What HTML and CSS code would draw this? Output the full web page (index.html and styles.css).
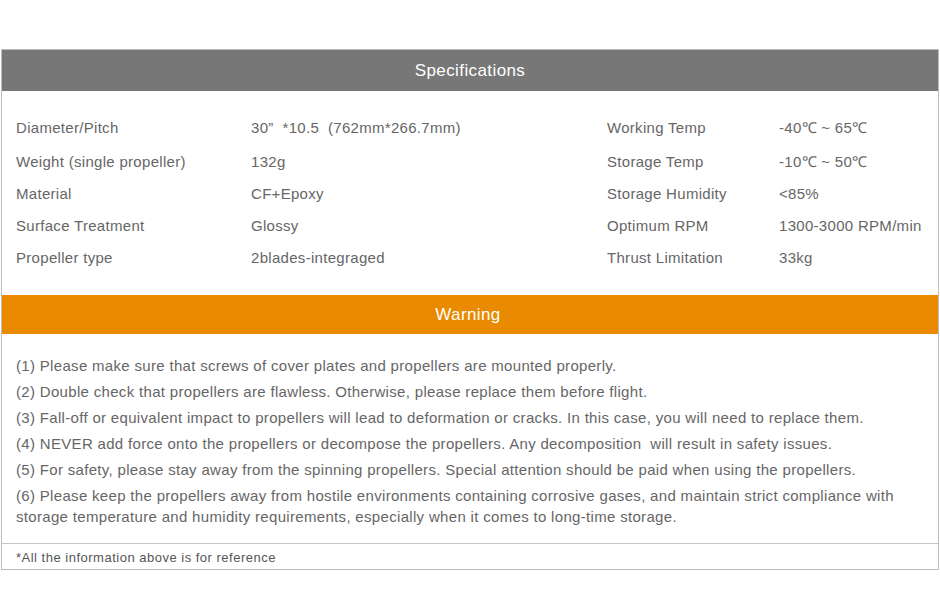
FILE: index.html
```html
<!DOCTYPE html>
<html lang="en">
<head>
<meta charset="utf-8">
<title>Specifications</title>
<link rel="stylesheet" href="styles.css">
</head>
<body>
<div class="panel">
  <div class="bar bar-gray">Specifications</div>
  <div class="specs">
    <div class="spec-row first">
      <span class="lbl">Diameter/Pitch</span>
      <span class="val">30”&nbsp;&nbsp;*10.5&nbsp;&nbsp;(762mm*266.7mm)</span>
      <span class="lbl2">Working Temp</span>
      <span class="val2">-40℃ ~ 65℃</span>
    </div>
    <div class="spec-row">
      <span class="lbl">Weight (single propeller)</span>
      <span class="val">132g</span>
      <span class="lbl2">Storage Temp</span>
      <span class="val2">-10℃ ~ 50℃</span>
    </div>
    <div class="spec-row">
      <span class="lbl">Material</span>
      <span class="val">CF+Epoxy</span>
      <span class="lbl2">Storage Humidity</span>
      <span class="val2">&lt;85%</span>
    </div>
    <div class="spec-row">
      <span class="lbl">Surface Treatment</span>
      <span class="val">Glossy</span>
      <span class="lbl2">Optimum RPM</span>
      <span class="val2">1300-3000 RPM/min</span>
    </div>
    <div class="spec-row">
      <span class="lbl">Propeller type</span>
      <span class="val">2blades-integraged</span>
      <span class="lbl2">Thrust Limitation</span>
      <span class="val2">33kg</span>
    </div>
  </div>
  <div class="bar bar-orange">Warning</div>
  <div class="warnings">
    <p>(1) Please make sure that screws of cover plates and propellers are mounted properly.</p>
    <p>(2) Double check that propellers are flawless. Otherwise, please replace them before flight.</p>
    <p>(3) Fall-off or equivalent impact to propellers will lead to deformation or cracks. In this case, you will need to replace them.</p>
    <p>(4) NEVER add force onto the propellers or decompose the propellers. Any decomposition&nbsp; will result in safety issues.</p>
    <p>(5) For safety, please stay away from the spinning propellers. Special attention should be paid when using the propellers.</p>
    <p>(6) Please keep the propellers away from hostile environments containing corrosive gases, and maintain strict compliance with storage temperature and humidity requirements, especially when it comes to long-time storage.</p>
  </div>
  <div class="note">*All the information above is for reference</div>
</div>
</body>
</html>
```
FILE: styles.css
```css
* { box-sizing: border-box; }
html, body { margin: 0; padding: 0; background: #fff; }
body {
  font-family: "Liberation Sans", Arial, sans-serif;
  color: #666;
  padding-top: 49px;
  padding-left: 1px;
}
.panel {
  width: 938px;
  border: 1px solid #bdbdbd;
}
.bar {
  color: #fff;
  text-align: center;
  font-size: 17px;
  letter-spacing: 0.4px;
  height: 41px;
  line-height: 42px;
}
.bar-gray { background: #777777; }
.bar-orange { background: #e98a00; height: 39px; line-height: 39px; padding-right: 4px; }
.specs {
  padding: 21px 0 21px 0;
  font-size: 15px;
  letter-spacing: 0.3px;
}
.spec-row {
  display: grid;
  grid-template-columns: 235px 355px 172px 1fr;
  height: 32px;
  line-height: 32px;
  padding-left: 14px;
  white-space: nowrap;
}
.spec-row.first { height: 34px; line-height: 32px; }
.lbl2 { padding-left: 1px; }
.val2 { padding-left: 1px; }
.warnings {
  padding: 21px 20px 16px 14px;
  font-size: 15px;
  letter-spacing: 0.32px;
}
.warnings p {
  margin: 0 0 5px 0;
  line-height: 21px;
}
.warnings p:last-child { margin-bottom: 0; }
.note {
  border-top: 1px solid #c4c4c4;
  height: 26px;
  line-height: 27px;
  font-size: 13px;
  letter-spacing: 0.5px;
  padding-left: 14px;
  color: #555;
}
```
